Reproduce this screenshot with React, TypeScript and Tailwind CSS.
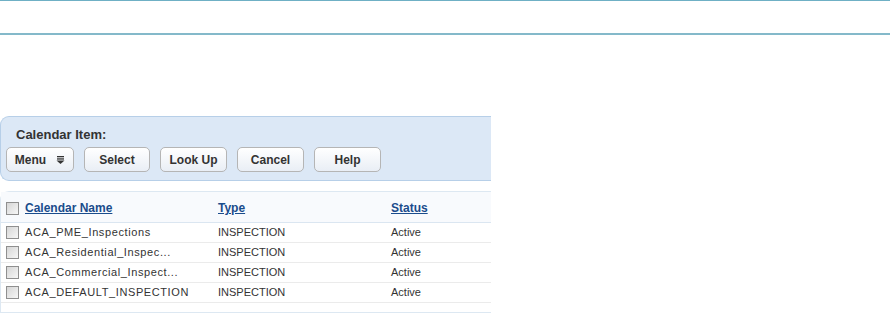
const rows = [
	{name: 'ACA_PME_Inspections', type: 'INSPECTION', status: 'Active'},
	{name: 'ACA_Residential_Inspec...', type: 'INSPECTION', status: 'Active'},
	{name: 'ACA_Commercial_Inspect...', type: 'INSPECTION', status: 'Active'},
	{name: 'ACA_DEFAULT_INSPECTION', type: 'INSPECTION', status: 'Active'},
];

const Box = () => (
	<span className="inline-block w-[13px] h-[13px] border border-[#8f8f8f] bg-gradient-to-br from-[#d6d6d6] to-[#f7f7f7] shrink-0" />
);

const Btn = ({label, w, children}: {label: string; w: string; children?: React.ReactNode}) => (
	<button
		className={`${w} h-[25px] rounded-[5px] border border-[#b5b5b5] bg-gradient-to-b from-white to-[#e9eef5] text-[12px] font-bold text-[#333] flex items-center justify-center gap-2`}
	>
		{label}
		{children}
	</button>
);

export default function App() {
	return (
		<div className="w-[890px] h-[315px] bg-white font-['Liberation_Sans',Arial,sans-serif] overflow-hidden">
			<div className="h-px bg-[#6fb0c5]" />
			<div className="h-[32px]" />
			<div className="h-[2px] bg-[#84b9ca]" />

			<div className="h-[81px]" />

			<div className="w-[491px] h-[65px] bg-[#dce8f6] border-y border-l border-[#b7cfe8] rounded-l-[9px] pl-[5px] pt-[10px]">
				<div className="pl-[10px] text-[13px] font-bold text-[#333] leading-[16px]">Calendar Item:</div>
				<div className="flex gap-[10px] mt-[4px]">
					<Btn label="Menu" w="w-[68px]">
						<svg width="9" height="8" viewBox="0 0 9 8" className="ml-[2px]">
							<rect x="1" y="0" width="7" height="1.3" fill="#333" />
							<rect x="1" y="2.3" width="7" height="1.3" fill="#333" />
							<path d="M0.5 4.6 H8.5 L4.5 8 Z" fill="#333" />
						</svg>
					</Btn>
					<Btn label="Select" w="w-[66px]" />
					<Btn label="Look Up" w="w-[67px]" />
					<Btn label="Cancel" w="w-[67px]" />
					<Btn label="Help" w="w-[67px]" />
				</div>
			</div>

			<div className="h-[10px]" />

			<div className="w-[491px] border-t border-l border-[#dde8f2] rounded-tl-[9px]">
				<div className="flex items-center h-[31px] pt-[2px] bg-[#f8fafd] border-b border-[#dbe6f1] pl-[5px]">
					<Box />
					<span className="ml-[6px] w-[193px] text-[12px] font-bold text-[#1a4c8c] underline">Calendar Name</span>
					<span className="w-[173px] text-[12px] font-bold text-[#1a4c8c] underline">Type</span>
					<span className="text-[12px] font-bold text-[#1a4c8c] underline">Status</span>
				</div>
				{rows.map((r) => (
					<div key={r.name} className="flex items-center h-[20px] border-b border-[#ebebeb] pl-[5px]">
						<Box />
						<span className="ml-[6px] w-[193px] text-[11px] tracking-[0.6px] text-[#333]">{r.name}</span>
						<span className="w-[173px] text-[11px] text-[#333]">{r.type}</span>
						<span className="text-[11px] text-[#333]">{r.status}</span>
					</div>
				))}
				<div className="h-[10px] border-b border-[#dde8f2]" />
			</div>
		</div>
	);
}
